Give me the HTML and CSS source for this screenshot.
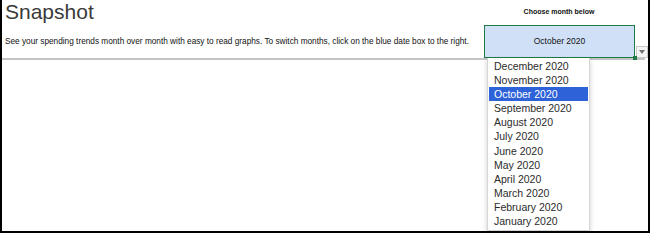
FILE: index.html
```html
<!DOCTYPE html>
<html lang="en">
<head>
    <meta charset="UTF-8">
    <title>Snapshot</title>
    <link rel="stylesheet" href="styles.css">
</head>
<body>

    <div class="sheet">
        <!-- Header: title, help text and month picker -->
        <div class="header">
            <div class="intro">
                <h1 class="title">Snapshot</h1>
                <p class="desc">See your spending trends month over month with easy to read graphs. To switch months, click on the blue date box to the right.</p>
            </div>
            <div class="picker">
                <div class="picker-label">Choose month below</div>
                <div class="picker-row">
                    <div class="date-box">October 2020</div>
                    <div class="drop-btn"><span class="arrow"></span></div>
                </div>
            </div>
        </div>
        <div class="divider"></div>

        <!-- Open month list -->
        <ul class="month-list">
            <li>December 2020</li>
            <li>November 2020</li>
            <li class="selected">October 2020</li>
            <li>September 2020</li>
            <li>August 2020</li>
            <li>July 2020</li>
            <li>June 2020</li>
            <li>May 2020</li>
            <li>April 2020</li>
            <li>March 2020</li>
            <li>February 2020</li>
            <li>January 2020</li>
        </ul>
    </div>

</body>
</html>
```

FILE: styles.css
```css
/* Page frame */
body {
    margin: 0;
    background: #fff;
    font-family: "Liberation Sans", Arial, sans-serif;
}
.sheet {
    position: relative;
    box-sizing: border-box;
    width: 650px;
    height: 233px;
    border-left: 2px solid #000;
    border-right: 2px solid #000;
    border-bottom: 2px solid #000;
}

/* Header */
.header {
    display: flex;
    height: 58px;
}
.intro {
    padding-left: 3px;
    width: 481px;
}
.title {
    margin: 0;
    font-size: 21px;
    font-weight: normal;
    line-height: 24px;
    color: #3a3a3a;
}
.desc {
    margin: 13px 0 0;
    font-size: 8.25px;
    line-height: 10px;
    color: #111;
    white-space: nowrap;
}

/* Month picker */
.picker {
    display: flex;
    flex-direction: column;
}
.picker-label {
    height: 25px;
    padding-right: 14px;
    line-height: 24px;
    font-size: 7px;
    font-weight: bold;
    text-align: center;
    color: #111;
}
.picker-row {
    display: flex;
    align-items: flex-end;
}
.date-box {
    position: relative;
    box-sizing: border-box;
    width: 151px;
    height: 33px;
    border: 1px solid #1f7a43;
    background: #cfe0f7;
    font-size: 8.5px;
    line-height: 31px;
    text-align: center;
    color: #111;
}
.date-box::after {
    content: "";
    position: absolute;
    right: -3px;
    bottom: -3px;
    width: 4px;
    height: 4px;
    background: #1f7a43;
}
.drop-btn {
    box-sizing: border-box;
    width: 12px;
    height: 12px;
    margin-left: 1px;
    border: 1px solid #c8c8c8;
    background: #f4f4f4;
    display: flex;
    align-items: center;
    justify-content: center;
}
.arrow {
    width: 0;
    height: 0;
    border-left: 3px solid transparent;
    border-right: 3px solid transparent;
    border-top: 4px solid #707070;
}

.divider {
    height: 2px;
    background: #c4c4c4;
    margin-right: 3px;
}

/* Open dropdown list */
.month-list {
    position: absolute;
    left: 485px;
    top: 58px;
    width: 99px;
    margin: 0;
    padding: 1px 1px 2px;
    list-style: none;
    background: #fff;
    border: 1px solid #d6d6d6;
    border-top: none;
    box-shadow: 0 2px 5px rgba(0, 0, 0, 0.2);
    font-family: "Liberation Sans", Helvetica, sans-serif;
    font-size: 10.5px;
    color: #2b2b2b;
}
.month-list li {
    height: 14.1px;
    line-height: 14px;
    padding-left: 5px;
}
.month-list li.selected {
    background: #2d62d9;
    color: #fff;
}
```
